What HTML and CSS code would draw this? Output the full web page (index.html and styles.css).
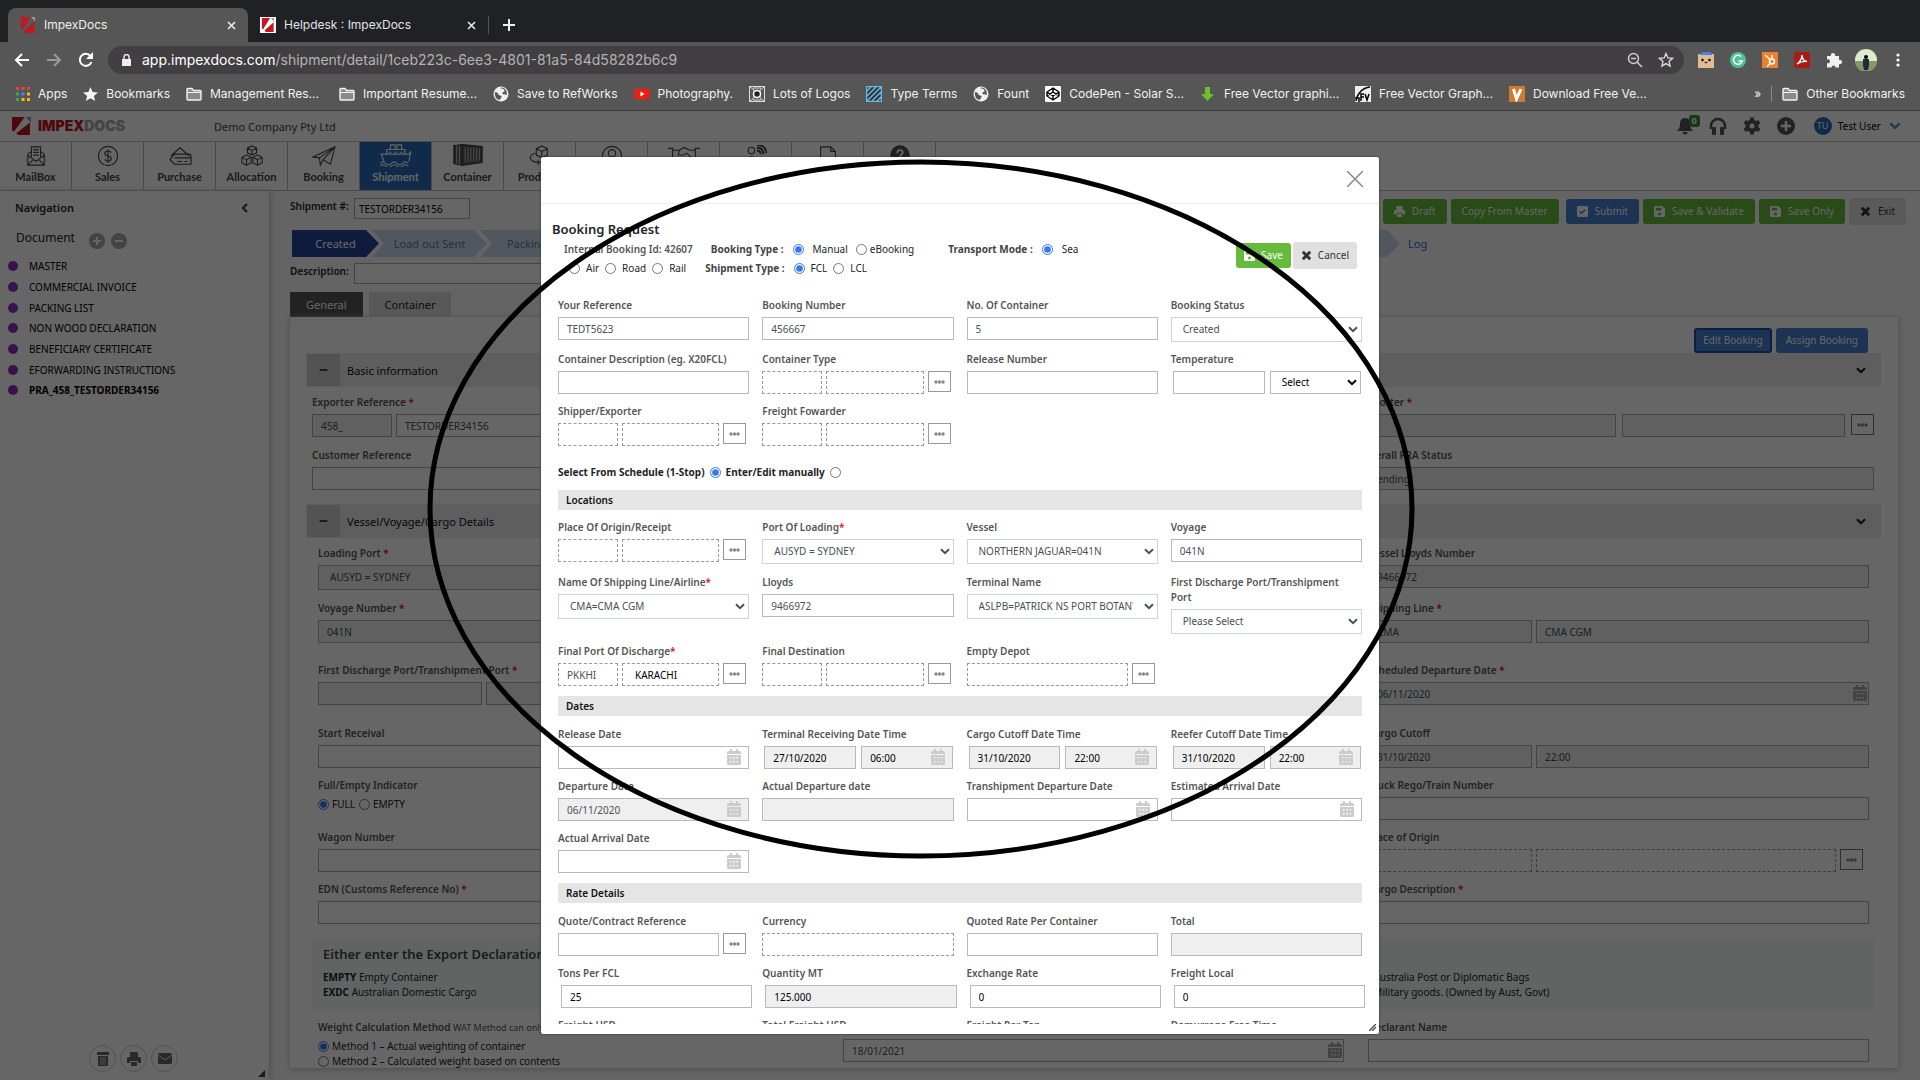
FILE: index.html
```html
<!DOCTYPE html>
<html lang="en">
<head>
<meta charset="utf-8">
<title>ImpexDocs</title>
<link rel="stylesheet" href="styles.css">
</head>
<body>
<svg class="sprite" aria-hidden="true">
  <symbol id="i-cal" viewBox="0 0 14 16"><path d="M3 0h2v2h4V0h2v2h1.500A1.500 1.500 0 0 1 14 3.500V5H0V3.500A1.500 1.500 0 0 1 1.500 2H3zM0 6h14v8.500a1.500 1.500 0 0 1-1.500 1.500h-11A1.500 1.500 0 0 1 0 14.500zM3 8v1.500h1.500V8zm3.300 0v1.500h1.500V8zm3.300 0v1.500h1.500V8zm-6.600 4v1.500h1.500V12zm3.300 0v1.500h1.500V12zm3.300 0v1.500h1.500V12z" fill-rule="evenodd"/></symbol>
  <symbol id="i-down" viewBox="0 0 10 7"><path d="M1 1.200l4 4 4-4" fill="none" stroke="currentColor" stroke-width="2"/></symbol>
  <symbol id="i-save" viewBox="0 0 12 12"><path d="M1.500 0H9l3 3v7.500a1.500 1.500 0 0 1-1.500 1.500h-9A1.500 1.500 0 0 1 0 10.500v-9A1.500 1.500 0 0 1 1.500 0zM2 2v3h6V2zm4 5a1.700 1.700 0 1 0 .01 0z" fill-rule="evenodd"/></symbol>
  <symbol id="i-x" viewBox="0 0 12 12"><path d="M2 2l8 8M10 2l-8 8" stroke="currentColor" stroke-width="3.200"/></symbol>
  <symbol id="i-print" viewBox="0 0 14 14"><path d="M3 0h7l1 1v4H3zM1.500 5h11A1.500 1.500 0 0 1 14 6.500V11h-3V9H3v2H0V6.500A1.500 1.500 0 0 1 1.500 5zM4 10h6v4H4z"/></symbol>
  <symbol id="i-folder" viewBox="0 0 16 14"><path d="M1 2.500a1 1 0 0 1 1-1h4l1.500 2H14a1 1 0 0 1 1 1V12a1 1 0 0 1-1 1H2a1 1 0 0 1-1-1z" fill="#8a8a8a" stroke="#f4f4f4" stroke-width="1.400"/><path d="M1 5.500h14" stroke="#f4f4f4"/></symbol>
  <symbol id="i-globe" viewBox="0 0 16 16"><circle cx="8" cy="8" r="7.500" fill="#f0f0f0"/><path d="M2 6c2 0 3 1 3.500 2.500S9 9 8.500 11 6 14 6 14C3 13 1.500 10 2 6zM7 3c2-1 4 0 4.500 1.500S9 6 9.500 7.500 13 8 13.500 9.500C14.500 6 13 2 8.500 1.500z" fill="#565656"/></symbol>
  <symbol id="i-logo" viewBox="0 0 18 20"><path d="M0 0h12L2 16 0 15zM17 6v14H6l-2-2z" fill="#c4161c"/><path d="M13 0h5v6z" fill="#9a9a9a"/></symbol>
  <symbol id="i-dots" viewBox="0 0 11 4"><circle cx="2" cy="2" r="1.700"/><circle cx="5.500" cy="2" r="1.700"/><circle cx="9" cy="2" r="1.700"/></symbol>
</svg>

<div class="tabs">
  <div class="tab tab-on"><svg class="s16" viewBox="0 0 18 20"><use href="#i-logo"/></svg><span>ImpexDocs</span><button class="tx" aria-label="Close tab"><svg viewBox="0 0 9 9"><path d="M1 1l7 7M8 1L1 8"/></svg></button></div>
  <div class="tab"><span class="fav"><svg viewBox="0 0 18 20"><use href="#i-logo"/></svg></span><span>Helpdesk : ImpexDocs</span><button class="tx" aria-label="Close tab"><svg viewBox="0 0 9 9"><path d="M1 1l7 7M8 1L1 8"/></svg></button></div>
  <button class="newtab" aria-label="New tab"><svg viewBox="0 0 12 12"><path d="M6 0v12M0 6h12" stroke="#eee" stroke-width="2"/></svg></button>
</div>
<div class="toolbar">
  <button aria-label="Back"><svg class="s16" viewBox="0 0 16 16"><path d="M15 8H2M8 2L2 8l6 6" fill="none" stroke="#fff" stroke-width="2"/></svg></button>
  <button aria-label="Forward"><svg class="s16" viewBox="0 0 16 16"><path d="M1 8h13M8 2l6 6-6 6" fill="none" stroke="#999" stroke-width="2"/></svg></button>
  <button aria-label="Reload"><svg class="s16" viewBox="0 0 16 16"><path d="M13.500 10A6 6 0 1 1 12.500 4" fill="none" stroke="#fff" stroke-width="2"/><path d="M15 0v7H8z" fill="#fff"/></svg></button>
  <div class="url">
    <svg width="9" height="12" viewBox="0 0 9 12"><path d="M0 5h9v7H0z" fill="#eee"/><path d="M2 5V3a2.500 2.500 0 0 1 5 0v2" fill="none" stroke="#eee" stroke-width="1.400"/></svg>
    <span class="addr"><b>app.impexdocs.com</b>/shipment/detail/1ceb223c-6ee3-4801-81a5-84d58282b6c9</span>
    <svg class="s16" viewBox="0 0 16 16" fill="none" stroke="#ccc" stroke-width="1.500"><circle cx="6.500" cy="6.500" r="5"/><path d="M10 10l5 5M4 6.500h5"/></svg>
    <svg class="s16 star" viewBox="0 0 16 16" fill="none" stroke="#ddd" stroke-width="1.300"><path d="M8 1.500l1.900 4.400 4.700.4-3.600 3.100 1.100 4.700L8 11.600l-4.100 2.500L5 9.400 1.400 6.300l4.700-.4z"/></svg>
  </div>
  <svg class="s16" viewBox="0 0 16 16"><path d="M0 2h16v14H0z" fill="#e3ba94"/><path d="M2 2l3-2h7l2 2v1H2z" fill="#4285e8"/><circle cx="4.500" cy="8" r="1.200"/><circle cx="11.500" cy="8" r="1.200"/><path d="M6.500 10l1.500 1 1.500-1" stroke="#000" fill="none"/></svg>
  <svg class="s16" viewBox="0 0 16 16"><circle cx="8" cy="8" r="8" fill="#4fbf98"/><path d="M11 4.500A4.500 4.500 0 1 0 12.300 9H8.500" fill="none" stroke="#fff" stroke-width="1.500"/></svg>
  <svg class="s16" viewBox="0 0 16 16"><path d="M0 0h16v16H0z" fill="#ef7f2d"/><g fill="none" stroke="#fff" stroke-width="1.500"><circle cx="10" cy="9.500" r="2.500"/><path d="M3 3l5 4.500M10 3v4M8 11.500l-3 3"/></g></svg>
  <svg class="s16" viewBox="0 0 16 16"><rect width="16" height="16" rx="2" fill="#a81c14"/><path d="M3 12c2-1 5-5 5-9 0 4 2 6 5 6.500-4-.5-7 .5-10 2.500z" fill="none" stroke="#fff" stroke-width="1.400"/></svg>
  <svg class="s16" viewBox="0 0 16 16"><path d="M1 4h4a2.200 2.200 0 1 1 4 0h4v4a2.200 2.200 0 1 1 0 4v3.500H9.500a2 2 0 1 0-4 0H1V11a2 2 0 1 0 0-3.500z" fill="#f0f0f0"/></svg>
  <svg width="22" height="22" viewBox="0 0 22 22"><circle cx="11" cy="11" r="11" fill="#dfe9cf"/><path d="M0 12h22a11 11 0 0 1-22 0z" fill="#7f9a62"/><circle cx="11" cy="8" r="2"/><path d="M8 10h6v6l-1 5H9l-1-5z" fill="#23283c"/></svg>
  <svg class="s16" viewBox="0 0 16 16" fill="#fff"><circle cx="8" cy="3" r="1.600"/><circle cx="8" cy="8" r="1.600"/><circle cx="8" cy="13" r="1.600"/></svg>
</div>
<div class="marks">
  <a href="#"><svg width="14" height="14" viewBox="0 0 14 14"><path d="M0 0h3v3H0zM5.500 0h3v3h-3zM11 0h3v3h-3z" fill="#ea4335"/><path d="M0 5.500h3v3H0zM0 11h3v3H0z" fill="#34a853"/><path d="M5.500 5.500h3v3h-3z" fill="#4285f4"/><path d="M11 5.500h3v3h-3zM5.500 11h3v3h-3zM11 11h3v3h-3z" fill="#fbbc05"/></svg><span>Apps</span></a>
  <a href="#"><svg width="15" height="14" viewBox="0 0 16 15"><path d="M8 0l2.200 5.400 5.800.5-4.400 3.700L13 15l-5-3-5 3 1.400-5.400L0 5.900l5.800-.5z" fill="#f4f4f4"/></svg><span>Bookmarks</span></a>
  <a href="#"><svg class="s16"><use href="#i-folder"/></svg><span class="cut">Management Res...</span></a>
  <a href="#"><svg class="s16"><use href="#i-folder"/></svg><span class="cut">Important Resume...</span></a>
  <a href="#"><svg class="s16"><use href="#i-globe"/></svg><span>Save to RefWorks</span></a>
  <a href="#"><svg class="s16" viewBox="0 0 16 16"><rect y="2.500" width="16" height="11" rx="3" fill="#e62117"/><path d="M6.500 5.500l4 2.500-4 2.500z" fill="#fff"/></svg><span>Photography.</span></a>
  <a href="#"><svg class="s16" viewBox="0 0 16 16"><path d="M0 0h16v16H0z" fill="#ddd"/><path d="M1 1h14v14H1z" fill="#555"/><path d="M1 1l4 3v8l-4 3M15 1l-4 3v8l4 3M4 2h8M4 14h8" stroke="#ddd" fill="none"/><circle cx="8" cy="8" r="3.500" fill="#222" stroke="#fff" stroke-width="1.500"/></svg><span>Lots of Logos</span></a>
  <a href="#"><svg class="s16" viewBox="0 0 16 16"><path d="M0 0h16v16H0z" fill="#333"/><path d="M.5.500h15v15H.5zM0 6l6-6M0 11L11 0M0 16L16 0M5 16L16 5M10 16l6-6" fill="none" stroke="#6ab8e6" stroke-width="1.500"/></svg><span>Type Terms</span></a>
  <a href="#"><svg class="s16"><use href="#i-globe"/></svg><span>Fount</span></a>
  <a href="#"><svg class="s16" viewBox="0 0 16 16"><rect width="16" height="16" rx="1" fill="#fff"/><path d="M8 2l6 4v4l-6 4-6-4V6zM2 6l6 4 6-4M2 10l6-4 6 4M8 2v4M8 10v4" fill="none" stroke="#000" stroke-width="1.400"/></svg><span class="cut">CodePen - Solar S...</span></a>
  <a href="#"><svg class="s16" viewBox="0 0 16 16"><path d="M5 1h5v7h4l-6.500 7L1 8h4z" fill="#6cc02c"/></svg><span class="cut">Free Vector graphi...</span></a>
  <a href="#"><svg class="s16" viewBox="0 0 16 16"><path d="M0 0h16v16H0z" fill="#eee"/><path d="M1 15C2 8 7 2 15 1M0 12h4v4M6 15V8h3M6 11h3M10 8l2 6 2-6" fill="none" stroke="#000" stroke-width="1.500"/></svg><span class="cut">Free Vector Graph...</span></a>
  <a href="#"><svg class="s16" viewBox="0 0 16 16"><path d="M0 0h16v16H0z" fill="#cf7a30"/><path d="M4.500 3l3 10L12 3" fill="none" stroke="#fff" stroke-width="3"/></svg><span>Download Free Ve...</span></a>
  <div class="more"><span>»</span><i></i><a href="#"><svg class="s16"><use href="#i-folder"/></svg><span>Other Bookmarks</span></a></div>
</div>

<div class="view">
  <div class="page">
    <header class="top">
      <a class="brand" href="#"><svg width="19" height="18" viewBox="0 0 18 20" preserveAspectRatio="none"><use href="#i-logo"/></svg><span><b>IMPEX</b>DOCS</span></a>
      <span class="company">Demo Company Pty Ltd</span>
      <div class="top-r">
        <span class="bell"><svg width="16" height="18" viewBox="0 0 16 18"><path d="M8 1c4 0 5 3 5 6s1 5 3 7H0c2-2 3-4 3-7s1-6 5-6zM5.500 15h5a2.500 2.500 0 0 1-5 0z" fill="#555"/></svg><em>0</em></span>
        <svg width="18" height="18" viewBox="0 0 18 18"><path d="M2 12V9a7 7 0 0 1 14 0v3" fill="none" stroke="#555" stroke-width="2.500"/><rect x="3" y="10" width="4" height="8" rx="1" fill="#555"/><rect x="11" y="10" width="4" height="8" rx="1" fill="#555"/></svg>
        <svg width="18" height="18" viewBox="0 0 18 18"><circle cx="9" cy="9" r="4.500" fill="none" stroke="#555" stroke-width="4"/><path d="M9 .5v4M9 13.500v4M1.600 4.800l3.500 2M12.900 11.200l3.500 2M1.600 13.200l3.500-2M12.900 6.800l3.500-2" stroke="#555" stroke-width="4"/></svg>
        <svg width="18" height="18" viewBox="0 0 18 18"><circle cx="9" cy="9" r="9" fill="#555"/><path d="M9 4v10M4 9h10" stroke="#fff" stroke-width="2.500"/></svg>
        <span class="avatar">TU</span><span class="user">Test User</span><svg class="uc" width="12" height="8" viewBox="0 0 10 7"><use href="#i-down"/></svg>
      </div>
    </header>
    <nav class="mods">
      <a href="#"><svg viewBox="0 0 28 24"><path d="M5 10v12h18V10l-4-3M9 7l-4 3M5 11l9 7 9-7M5 22l6-6M23 22l-6-6M9 13V2h10v11M11 5h6M11 8h6M11 11h6"/></svg>MailBox</a>
      <a href="#"><svg viewBox="0 0 28 24"><circle cx="14" cy="12" r="10.500"/><path d="M17.500 8.500C17 7 15.500 6.500 14 6.500c-2 0-3.500 1-3.500 2.700 0 3.800 7 2 7 5.800 0 1.700-1.500 2.700-3.500 2.700-1.700 0-3-.7-3.500-2.200M14 4.500v15"/></svg>Sales</a>
      <a href="#"><svg viewBox="0 0 28 24"><path d="M4 12l10-9 10 9M8 10h16a2 2 0 0 1 2 2v9H8l-5-5 5-6M8 14h18M11 18h5M19 18h3"/></svg>Purchase</a>
      <a href="#"><svg viewBox="0 0 28 24"><path d="M14 1l5 2.500v5L14 11 9 8.500v-5zM9 3.500L14 6l5-2.500M14 6v5M8 11l5 2.500v6L8 22l-5-2.500v-6zM3 13.500L8 16l5-2.500M8 16v6M20 11l5 2.500v6L20 22l-5-2.500v-6zM15 13.500l5 2.500 5-2.500M20 16v6"/></svg>Allocation</a>
      <a href="#"><svg viewBox="0 0 28 24"><path d="M2 13L26 2l-5 19-8-5-3 6-1-8zM9 14L26 2 13 16"/></svg>Booking</a>
      <a href="#" class="on"><svg class="ship" viewBox="0 0 36 26"><path d="M5 20L2 12h30l2-3-2 11M8 12V7h20l-1 5M12 7V2h5v5M19 7V2h5v5M10 10h3M16 10h3M22 10h3M1 22q3-3 6 0t6 0 6 0 6 0 6 0M1 25q3-3 6 0t6 0 6 0 6 0 6 0"/></svg>Shipment</a>
      <a href="#"><svg class="ship" viewBox="0 0 36 24"><path d="M3 2l9-1v22l-9-2zM12 1l21 2v17l-21 3z" fill="#555"/><path d="M6 2v19M9 2v20M15 4v16M18 4v16M21 4v15M24 4v15M27 4v15M30 5v13" stroke="#bbb"/></svg>Container</a>
      <a href="#"><svg viewBox="0 0 28 24"><path d="M16 1l6 3v7l-6 3-6-3V4zM10 4l6 3 6-3M16 7v7M9 9c-8 2-8 9 3 10 8 0 12-3 13-6M12 16v6"/></svg>Products</a>
      <a href="#"><svg viewBox="0 0 28 24"><circle cx="14" cy="12" r="10.500"/><circle cx="14" cy="9" r="4"/><path d="M7 20c1-8 13-8 14 0"/></svg>Parties</a>
      <a href="#"><svg class="ship" viewBox="0 0 36 24"><path d="M1 5h5v12H1M35 5h-5v12h5M6 7h7l5-3 6 3h6M6 16l10 6 10-6M13 7l-1 5h5l4-2 6 6"/></svg>Deals</a>
      <a href="#"><svg viewBox="0 0 28 24"><circle cx="9" cy="6" r="3.500"/><path d="M3 20c0-9 12-9 12 0M15 6c3 0 4 2 4 4M15 3c5 0 7 3 7 7M15 0c8 0 10 5 10 9" stroke-width="2"/></svg>Contacts</a>
      <a href="#"><svg viewBox="0 0 28 24"><path d="M6 2h11l5 5v15H6zM17 2v5h5"/></svg>Reports</a>
      <a href="#"><svg viewBox="0 0 28 24"><circle cx="14" cy="11" r="10" fill="#555"/><path d="M11 9c0-5 7-4 6-.5-.5 2-3 2-3 4.500M14 15v2" stroke="#fff" stroke-width="2"/></svg>Help</a>
    </nav>
    <div class="cols">
      <aside class="side">
        <div class="side-h"><strong>Navigation</strong><svg width="8" height="10" viewBox="0 0 8 10"><path d="M6 1L2 5l4 4" fill="none" stroke="#444" stroke-width="2.200"/></svg></div>
        <div class="side-d"><span>Document</span>
          <button aria-label="Add document"><svg class="s16" viewBox="0 0 16 16"><circle cx="8" cy="8" r="8" fill="#aaa"/><path d="M8 4v8M4 8h8" stroke="#fff" stroke-width="2"/></svg></button>
          <button aria-label="Remove document"><svg class="s16" viewBox="0 0 16 16"><circle cx="8" cy="8" r="8" fill="#aaa"/><path d="M4 8h8" stroke="#fff" stroke-width="2"/></svg></button></div>
        <ul class="docs"><li>MASTER</li><li>COMMERCIAL INVOICE</li><li>PACKING LIST</li><li>NON WOOD DECLARATION</li><li>BENEFICIARY CERTIFICATE</li><li>EFORWARDING INSTRUCTIONS</li><li><b>PRA_458_TESTORDER34156</b></li></ul>
        <div class="side-b">
          <button aria-label="Delete"><svg width="12" height="14" viewBox="0 0 12 14"><path d="M0 0h12v3H0zM1 4h10v10H1z" fill="#666"/><path d="M4 5v8M6 5v8M8 5v8" stroke="#ccc"/></svg></button>
          <button aria-label="Print"><svg width="14" height="14"><use href="#i-print" fill="#666"/></svg></button>
          <button aria-label="Email"><svg width="14" height="11" viewBox="0 0 14 11"><rect width="14" height="11" rx="1.500" fill="#666"/><path d="M0 2l7 5 7-5" fill="none" stroke="#eee"/></svg></button>
        </div>
        <svg class="grip" width="7" height="7" viewBox="0 0 7 7"><path d="M7 0v7H0z" fill="#444"/></svg>
      </aside>
      <main class="main">
        <div class="head">
          <div class="line"><label for="ship">Shipment #:</label><input id="ship" class="ship-no" value="TESTORDER34156"></div>
          <div class="acts">
            <button class="btn blue">Action</button>
            <button class="btn"><svg><use href="#i-print"/></svg>Draft</button>
            <button class="btn sp">Copy From Master</button>
            <button class="btn blue"><svg viewBox="0 0 12 12"><path d="M1 0h10l1 1v10l-1 1H1l-1-1V1z"/><path d="M3 6l2 2 4-4" fill="none" stroke="#4a7fd0" stroke-width="1.500"/></svg>Submit</button>
            <button class="btn"><svg><use href="#i-save"/></svg>Save &amp; Validate</button>
            <button class="btn"><svg><use href="#i-save"/></svg>Save Only</button>
            <button class="btn grey"><svg><use href="#i-x"/></svg>Exit</button>
          </div>
        </div>
        <div class="steps"><span class="step cur">Created</span><span class="step">Load out Sent</span><span class="step">Packing List</span><span class="step rest"></span><a href="#">Log</a></div>
        <div class="line desc"><label for="desc">Description:</label><input id="desc"></div>
        <div class="tabs2"><button class="on">General</button><button>Container</button></div>
        <div class="panel">
          <div class="bk"><button class="btn blue focus">Edit Booking</button><button class="btn blue">Assign Booking</button></div>
          <div class="sec"><i>–</i><span>Basic information</span><svg width="10" height="7"><use href="#i-down"/></svg></div>
          <div class="basic">
            <div class="row r53">
              <div class="f"><label for="er">Exporter Reference <u>*</u></label><div class="g"><input id="er" class="w80" value="458_" readonly><input aria-label="Order" value="TESTORDER34156"></div></div>
              <div class="f c3"><label for="ex">Exporter <u>*</u></label><div class="g wide"><input id="ex" class="w254" readonly><input aria-label="Exporter name" readonly><button class="dots" aria-label="Find exporter"><svg><use href="#i-dots"/></svg></button></div></div>
            </div>
            <div class="row r56">
              <div class="f"><label for="cr">Customer Reference</label><input id="cr"></div>
              <div class="f c3"><label for="ps">Overall PRA Status</label><input id="ps" value="Pending" readonly></div>
            </div>
          </div>
          <div class="sec"><i>–</i><span>Vessel/Voyage/Cargo Details</span><svg width="10" height="7"><use href="#i-down"/></svg></div>
          <div class="cargo">
            <div class="row r55">
              <div class="f"><label for="lp">Loading Port <u>*</u></label><select id="lp" class="dis"><option>AUSYD = SYDNEY</option></select></div>
              <div class="f c3"><label for="vl">Vessel Lloyds Number</label><input id="vl" value="9466972" readonly></div>
            </div>
            <div class="row r62">
              <div class="f"><label for="vn">Voyage Number <u>*</u></label><input id="vn" value="041N" readonly></div>
              <div class="f c3"><label for="sl">Shipping Line <u>*</u></label><div class="g"><input id="sl" class="third" value="CMA" readonly><input aria-label="Shipping line name" value="CMA CGM" readonly></div></div>
            </div>
            <div class="row r63">
              <div class="f"><label for="fd">First Discharge Port/Transhipment Port <u>*</u></label><div class="g"><input id="fd" class="third" readonly><input aria-label="Discharge port name" readonly></div></div>
              <div class="f c3"><label for="sd">Scheduled Departure Date <u>*</u></label><div class="d edge"><input id="sd" value="06/11/2020" readonly><svg><use href="#i-cal"/></svg></div></div>
            </div>
            <div class="row r52">
              <div class="f"><label for="sr">Start Receival</label><input id="sr"></div>
              <div class="f c3"><label for="cc">Cargo Cutoff</label><div class="g"><input id="cc" class="third" value="31/10/2020" readonly><input aria-label="Cargo cutoff time" value="22:00" readonly></div></div>
            </div>
            <div class="row r52">
              <fieldset class="f"><legend>Full/Empty Indicator</legend><div class="rad"><label><input type="radio" name="fe" checked>FULL</label><label><input type="radio" name="fe">EMPTY</label></div></fieldset>
              <div class="f c3"><label for="tr">Truck Rego/Train Number</label><input id="tr"></div>
            </div>
            <div class="row r52">
              <div class="f"><label for="wn">Wagon Number</label><input id="wn"></div>
              <div class="f c3"><label for="po">Place of Origin</label><div class="g origin"><input id="po" class="third dash"><input aria-label="Origin name" class="dash"><button class="dots" aria-label="Find origin"><svg><use href="#i-dots"/></svg></button></div></div>
            </div>
            <div class="row r52">
              <div class="f"><label for="edn">EDN (Customs Reference No) <u>*</u></label><input id="edn"></div>
              <div class="f c3"><label for="cd">Cargo Description <u>*</u></label><input id="cd"></div>
            </div>
          </div>
          <div class="note"><h3>Either enter the Export Declaration</h3>
            <div class="note-g"><p><b>EMPTY</b> Empty Container<br><b>EXDC</b> Australian Domestic Cargo</p><p class="c3">Australia Post or Diplomatic Bags<br>Military goods. (Owned by Aust, Govt)</p></div>
          </div>
          <div class="cargo last">
            <div class="row">
              <fieldset class="f"><legend>Weight Calculation Method <small>WAT Method can only</small></legend><div class="rad col"><label><input type="radio" name="wm" checked>Method 1 – Actual weighting of container</label><label><input type="radio" name="wm">Method 2 – Calculated weight based on contents</label></div></fieldset>
              <div class="f"><label for="dd">Declaration Date</label><div class="d edge"><input id="dd" value="18/01/2021"><svg><use href="#i-cal"/></svg></div></div>
              <div class="f"><label for="dn">Declarant Name</label><input id="dn"></div>
            </div>
          </div>
        </div>
      </main>
    </div>
  </div>

  <div class="backdrop">
    <div class="dialog" role="dialog" aria-label="Booking Request">
      <div class="dlg-h"><button aria-label="Close"><svg width="16" height="16" viewBox="0 0 16 16"><path d="M0 0l16 16M16 0L0 16" stroke="#888" stroke-width="1.500"/></svg></button></div>
      <div class="dlg-b">
        <h2>Booking Request</h2>
        <div class="opts">
          <div class="opt-lines">
            <div class="ol"><span class="id">Internal Booking Id: 42607</span><strong>Booking Type :</strong><label><input type="radio" name="bt" checked>Manual</label><label class="tight"><input type="radio" name="bt">eBooking</label><strong class="tm">Transport Mode :</strong><label><input type="radio" name="tm" checked>Sea</label></div>
            <div class="ol two"><label><input type="radio" name="tm">Air</label><label><input type="radio" name="tm">Road</label><label><input type="radio" name="tm">Rail</label><strong>Shipment Type :</strong><label><input type="radio" name="st" checked>FCL</label><label><input type="radio" name="st">LCL</label></div>
          </div>
          <div class="sv"><button class="btn"><svg><use href="#i-save"/></svg>Save</button><button class="btn grey"><svg><use href="#i-x"/></svg>Cancel</button></div>
        </div>
        <div class="form">
          <div class="row r54">
            <div class="f"><label for="a1">Your Reference</label><input id="a1" value="TEDT5623"></div>
            <div class="f"><label for="a2">Booking Number</label><input id="a2" value="456667"></div>
            <div class="f"><label for="a3">No. Of Container</label><input id="a3" value="5"></div>
            <div class="f"><label for="a4">Booking Status</label><div class="s"><select id="a4"><option>Created</option></select><svg><use href="#i-down"/></svg></div></div>
          </div>
          <div class="row r52">
            <div class="f"><label for="b1">Container Description (eg. X20FCL)</label><input id="b1"></div>
            <div class="f"><label for="b2">Container Type</label><div class="g pick"><input id="b2" class="dash w60"><input class="dash" aria-label="Container type name"><button class="dots" aria-label="Find container type"><svg><use href="#i-dots"/></svg></button></div></div>
            <div class="f"><label for="b3">Release Number</label><input id="b3"></div>
            <div class="f"><label for="b4">Temperature</label><div class="g half"><input id="b4"><div class="s low"><select aria-label="Temperature unit"><option>Select</option></select><svg><use href="#i-down"/></svg></div></div></div>
          </div>
          <div class="row r52">
            <div class="f"><label for="c1">Shipper/Exporter</label><div class="g pick"><input id="c1" class="dash w60"><input class="dash" aria-label="Shipper name"><button class="dots" aria-label="Find shipper"><svg><use href="#i-dots"/></svg></button></div></div>
            <div class="f"><label for="c2">Freight Fowarder</label><div class="g pick"><input id="c2" class="dash w60"><input class="dash" aria-label="Forwarder name"><button class="dots" aria-label="Find forwarder"><svg><use href="#i-dots"/></svg></button></div></div>
          </div>
          <div class="sched"><label for="s1">Select From Schedule (1-Stop)</label><input id="s1" type="radio" name="sc" checked><label for="s2">Enter/Edit manually</label><input id="s2" type="radio" name="sc"></div>
          <h3 class="bar">Locations</h3>
          <div class="row r55">
            <div class="f"><label for="d1">Place Of Origin/Receipt</label><div class="g pick"><input id="d1" class="dash w60"><input class="dash" aria-label="Origin name"><button class="dots" aria-label="Find place"><svg><use href="#i-dots"/></svg></button></div></div>
            <div class="f"><label for="d2">Port Of Loading<u>*</u></label><div class="s"><select id="d2"><option>AUSYD = SYDNEY</option></select><svg><use href="#i-down"/></svg></div></div>
            <div class="f"><label for="d3">Vessel</label><div class="s"><select id="d3"><option>NORTHERN JAGUAR=041N</option></select><svg><use href="#i-down"/></svg></div></div>
            <div class="f"><label for="d4">Voyage</label><input id="d4" value="041N"></div>
          </div>
          <div class="row r69">
            <div class="f"><label for="e1">Name Of Shipping Line/Airline<u>*</u></label><div class="s"><select id="e1"><option>CMA=CMA CGM</option></select><svg><use href="#i-down"/></svg></div></div>
            <div class="f"><label for="e2">Lloyds</label><input id="e2" value="9466972"></div>
            <div class="f"><label for="e3">Terminal Name</label><div class="s"><select id="e3"><option>ASLPB=PATRICK NS PORT BOTANY</option></select><svg><use href="#i-down"/></svg></div></div>
            <div class="f"><label for="e4">First Discharge Port/Transhipment<br>Port</label><div class="s"><select id="e4"><option>Please Select</option></select><svg><use href="#i-down"/></svg></div></div>
          </div>
          <div class="row r52">
            <div class="f"><label for="g1">Final Port Of Discharge<u>*</u></label><div class="g pick"><input id="g1" class="dash w60" value="PKKHI"><input class="dash blk" aria-label="Port name" value="KARACHI"><button class="dots" aria-label="Find port"><svg><use href="#i-dots"/></svg></button></div></div>
            <div class="f"><label for="g2">Final Destination</label><div class="g pick"><input id="g2" class="dash w60"><input class="dash" aria-label="Destination name"><button class="dots" aria-label="Find destination"><svg><use href="#i-dots"/></svg></button></div></div>
            <div class="f"><label for="g3">Empty Depot</label><div class="g pick"><input id="g3" class="dash"><button class="dots" aria-label="Find depot"><svg><use href="#i-dots"/></svg></button></div></div>
          </div>
          <h3 class="bar">Dates</h3>
          <div class="row r52">
            <div class="f"><label for="h1">Release Date</label><div class="d"><input id="h1"><svg><use href="#i-cal"/></svg></div></div>
            <div class="f"><label for="h2">Terminal Receiving Date Time</label><div class="g half blk"><input id="h2" value="27/10/2020" readonly><div class="d"><input aria-label="Receiving time" value="06:00" readonly><svg><use href="#i-cal"/></svg></div></div></div>
            <div class="f"><label for="h3">Cargo Cutoff Date Time</label><div class="g half blk"><input id="h3" value="31/10/2020" readonly><div class="d"><input aria-label="Cutoff time" value="22:00" readonly><svg><use href="#i-cal"/></svg></div></div></div>
            <div class="f"><label for="h4">Reefer Cutoff Date Time</label><div class="g half blk"><input id="h4" value="31/10/2020" readonly><div class="d"><input aria-label="Reefer cutoff time" value="22:00" readonly><svg><use href="#i-cal"/></svg></div></div></div>
          </div>
          <div class="row r52">
            <div class="f"><label for="j1">Departure Date</label><div class="d"><input id="j1" value="06/11/2020" readonly><svg><use href="#i-cal"/></svg></div></div>
            <div class="f"><label for="j2">Actual Departure date</label><input id="j2" readonly></div>
            <div class="f"><label for="j3">Transhipment Departure Date</label><div class="d"><input id="j3"><svg><use href="#i-cal"/></svg></div></div>
            <div class="f"><label for="j4">Estimated Arrival Date</label><div class="d"><input id="j4"><svg><use href="#i-cal"/></svg></div></div>
          </div>
          <div class="row r52"><div class="f"><label for="k1">Actual Arrival Date</label><div class="d"><input id="k1"><svg><use href="#i-cal"/></svg></div></div></div>
          <h3 class="bar">Rate Details</h3>
          <div class="row r52">
            <div class="f"><label for="l1">Quote/Contract Reference</label><div class="g pick"><input id="l1"><button class="dots" aria-label="Find quote"><svg><use href="#i-dots"/></svg></button></div></div>
            <div class="f"><label for="l2">Currency</label><input id="l2" class="dash"></div>
            <div class="f"><label for="l3">Quoted Rate Per Container</label><input id="l3"></div>
            <div class="f"><label for="l4">Total</label><input id="l4" readonly></div>
          </div>
          <div class="row r52 nums">
            <div class="f"><label for="m1">Tons Per FCL</label><input id="m1" value="25"></div>
            <div class="f"><label for="m2">Quantity MT</label><input id="m2" value="125.000" readonly></div>
            <div class="f"><label for="m3">Exchange Rate</label><input id="m3" value="0"></div>
            <div class="f"><label for="m4">Freight Local</label><input id="m4" value="0"></div>
          </div>
          <div class="row">
            <div class="f"><label for="n1">Freight USD</label><input id="n1"></div>
            <div class="f"><label for="n2">Total Freight USD</label><input id="n2"></div>
            <div class="f"><label for="n3">Freight Per Ton</label><input id="n3"></div>
            <div class="f"><label for="n4">Demurrage Free Time</label><input id="n4"></div>
          </div>
        </div>
      </div>
      <svg class="grip" width="7" height="7" viewBox="0 0 7 7"><path d="M7 0L0 7M7 3L3 7" stroke="#555" stroke-width="1.500"/></svg>
    </div>
    <svg class="mark" viewBox="0 0 988 700"><ellipse cx="494" cy="350" rx="491" ry="347" fill="none" stroke="#000" stroke-width="5"/></svg>
  </div>
</div>
</body>
</html>
```
FILE: styles.css
```css
* { box-sizing: border-box; }
body { margin: 0; height: 100vh; display: flex; flex-direction: column; overflow: hidden; font: 10px/15px "Noto Sans", "Open Sans", sans-serif; color: #212529; background: #565656; }
button { border: 0; background: none; padding: 0; font: inherit; color: inherit; }
svg { display: block; flex: none; }
a { color: inherit; text-decoration: none; }
h2, h3, p, ul, fieldset { margin: 0; padding: 0; border: 0; min-width: 0; }
.sprite { position: absolute; width: 0; height: 0; }
.s16 { width: 16px; height: 16px; }

/* browser frame */
.tabs { height: 42px; background: #202124; padding: 8px 8px 0; display: flex; font: 12px/34px Inter, sans-serif; color: #e4e4e4; flex: none; }
.tab { width: 240px; padding: 0 12px; display: flex; align-items: center; gap: 8px; }
.tab span:not(.fav) { flex: 1; }
.tab-on { background: #565656; border-radius: 8px 8px 0 0; color: #f0f0f0; }
.tx svg { width: 9px; height: 9px; stroke: #eee; stroke-width: 1.500; }
.fav { width: 16px; height: 16px; background: #fff; padding: 1px; }
.fav svg { width: 14px; height: 14px; }
.newtab { padding: 0 14px; border-left: 1px solid #555; margin: 8px 0; }
.newtab svg { width: 12px; height: 12px; }
.toolbar { height: 36px; display: flex; align-items: center; gap: 16px; padding: 0 14px; flex: none; }
.toolbar > svg[width="22"] { margin: 0 -3px; }
.url { flex: 1; height: 28px; margin-left: -2px; margin-right: -2px; border-radius: 14px; background: #413f42; display: flex; align-items: center; gap: 11px; padding: 0 10px 0 14px; }
.addr { flex: 1; font: 14px/28px Inter, sans-serif; color: #b4b4b4; }
.addr b { font-weight: 400; color: #fff; }
.star { margin-left: 4px; }
.marks { height: 33px; border-bottom: 1px solid #3c3c3c; display: flex; align-items: center; gap: 16px; padding: 0 15px 0 16px; font: 12px/16px Inter, sans-serif; color: #f2f2f2; flex: none; white-space: nowrap; }
.marks a { display: flex; align-items: center; gap: 8px; }
.cut { min-width: 113px; }
.more { margin-left: auto; display: flex; gap: 10px; }
.more i { width: 1px; background: #888; }

/* application */
.view { flex: 1; position: relative; overflow: hidden; min-height: 0; }
.page { height: 100%; background: #fff; display: flex; flex-direction: column; }
.top { height: 31px; border-bottom: 1px solid #bbb; display: flex; align-items: center; padding: 0 19px 0 12px; flex: none; }
.brand { display: flex; align-items: center; gap: 7px; width: 202px; font: 900 14px/18px Inter, sans-serif; color: #aaa; }
.brand b { color: #c4161c; font-weight: 900; }
.company { font-size: 11px; color: #444; }
.top-r { margin-left: auto; display: flex; align-items: center; gap: 16px; }
.bell { position: relative; }
.bell em { position: absolute; left: 12px; top: -2px; width: 11px; height: 12px; border-radius: 3px; background: #2f9a2f; color: #fff; font: 700 9px/12px "Noto Sans", sans-serif; text-align: center; }
.avatar { width: 18px; height: 18px; border-radius: 50%; background: #2a6bb9; color: #fff; font-size: 9px; line-height: 18px; text-align: center; margin-left: 3px; }
.user { margin: 0 -8px 0 -10px; color: #000; }
.uc { color: #4a86d0; }
.mods { height: 49px; display: flex; border-bottom: 1px solid #bbb; flex: none; font: 700 11px/14px Lato, sans-serif; }
.mods a { width: 72px; border-right: 1px solid #bbb; display: flex; flex-direction: column; align-items: center; justify-content: flex-end; gap: 3px; padding-bottom: 6px; color: #444; }
.mods svg { width: 26px; height: 22px; fill: none; stroke: #444; stroke-width: 1.200; }
.mods .ship { width: 34px; height: 24px; }
.mods .on { background: #2a6bb9; color: #fff; }
.mods .on svg { stroke: #fff; }
.cols { flex: 1; display: flex; min-height: 0; }
.side { width: 269px; flex: none; position: relative; display: flex; flex-direction: column; border-right: 1px solid #f0f0f0; box-shadow: 2px 0 6px #ccc; padding-bottom: 8px; }
.side-h { display: flex; justify-content: space-between; align-items: center; padding: 7px 19px 0 15px; font-size: 11px; line-height: 20px; }
.side-h strong { font-weight: 600; }
.side-d { display: flex; align-items: flex-end; gap: 6px; padding: 9px 0 0 16px; font-size: 12px; line-height: 22px; }
.side-d span { margin-right: 8px; }
.docs { list-style: none; padding: 7px 0 0 8px; flex: 1; line-height: 20px; color: #000; display: flex; flex-direction: column; }
.docs li { display: flex; align-items: center; gap: 11px; margin-bottom: 1px; }
.docs li:nth-child(3), .docs li:nth-child(6) { margin-bottom: 0; }
.docs li::before { content: ""; width: 10px; height: 10px; border-radius: 50%; background: #8a2fc0; }
.side-b { display: flex; gap: 4px; padding-left: 89px; }
.side-b button { width: 27px; height: 27px; border: 1px solid #ccc; border-radius: 50%; display: flex; align-items: center; justify-content: center; }
.grip { position: absolute; right: 3px; bottom: 3px; }
.main { flex: 1; background: #fafafa; padding: 7px 22px 12px 21px; min-width: 0; display: flex; flex-direction: column; }
.head { display: flex; justify-content: space-between; margin-right: -8px; }
.line { display: flex; gap: 4px; }
.line label { width: 60px; font-weight: 600; line-height: 17px; white-space: nowrap; }
.line input { height: 21px; color: #000; padding: 0 4px; }
.line .ship-no { width: 116px; }
.acts { display: flex; gap: 4px; align-items: center; height: 26px; }
.acts .btn { padding: 0 11px; gap: 7px; }
.acts .sp { margin-right: 3px; }
.btn { height: 25px; border-radius: 3px; background: #65bb3b; color: #fff; padding: 0 9px; display: flex; align-items: center; gap: 8px; white-space: nowrap; }
.btn svg { width: 11px; height: 11px; fill: #fff; }
.btn.blue { background: #4a7fd0; }
.btn.grey { background: #e0e0e0; color: #333; height: 27px; }
.bk .btn { padding: 0 10px; }
.bk .focus { border: 2px solid #1d4fa8; padding: 0 7px; }
.steps { display: flex; height: 27px; margin: 6px 0 6px 2px; font-size: 11px; line-height: 27px; }
.step { width: 115px; margin-right: -7px; background: #ccdaee; color: #66788f; text-align: center; clip-path: polygon(0 0, calc(100% - 13px) 0, 100% 50%, calc(100% - 13px) 100%, 0 100%, 12px 50%); }
.step.cur { width: 87px; background: #24459a; color: #fff; clip-path: polygon(0 0, calc(100% - 13px) 0, 100% 50%, calc(100% - 13px) 100%, 0 100%); }
.step.rest { flex: 1; max-width: 812px; margin-right: 8px; }
.steps a { color: #2a6bd0; }
.desc input { flex: 0 1 900px; }
.tabs2 { display: flex; gap: 6px; margin-top: 8px; font-size: 11px; }
.tabs2 button { height: 25px; padding: 0 16px; background: #dcdcdc; }
.tabs2 .on { background: #555; color: #fff; }
.panel { flex: 1; background: #fff; box-shadow: 0 1px 6px #bbb; padding: 11px 17px 0 16px; min-height: 0; }
.bk { display: flex; justify-content: flex-end; gap: 4px; padding-right: 13px; }
.sec { height: 34px; background: #ebebeb; display: flex; align-items: center; gap: 7px; padding-right: 15px; font-size: 11px; color: #111; }
.sec i { width: 33px; height: 32px; margin-left: 1px; background: #d0d0d0; text-align: center; font: 700 18px/28px "Noto Sans", sans-serif; color: #444; }
.sec span { flex: 1; }
.basic { padding: 8px 7px 0 6px; }
.basic .row { gap: 13px; grid-template-columns: repeat(3, 1fr); }
.cargo { padding: 8px 12px 0; }
.cargo .row { gap: 24px; grid-template-columns: repeat(3, 1fr); }
.note { margin: 4px 7px 0 6px; height: 73px; background: #effbf7; padding: 6px 11px; line-height: 15px; }
.note h3 { font-size: 13px; line-height: 20px; font-weight: 600; color: #444; margin-bottom: 6px; }
.note-g { display: grid; grid-template-columns: repeat(3, 1fr); gap: 13px; }
.note-g .c3 { margin-left: 15px; }
.cargo.last { padding-top: 9px; }

/* form parts */
.row { display: grid; grid-template-columns: repeat(4, 1fr); gap: 13px; align-items: start; }
.r52 { min-height: 52px; } .r53 { min-height: 53px; } .r54 { min-height: 54px; } .r55 { min-height: 55px; }
.r56 { min-height: 56px; } .r62 { min-height: 62px; } .r63 { min-height: 63px; } .r69 { min-height: 69px; }
.c3 { grid-column: 3; }
.f { min-width: 0; }
.f > label, legend { display: block; padding: 0; height: auto; margin-bottom: 4px; font-weight: 600; color: #555; white-space: nowrap; }
small { font-size: 9px; line-height: 10px; font-weight: 400; }
u { text-decoration: none; color: #d9151b; }
input, select { font: inherit; font-size: 10px; color: #495057; margin: 0; border: 1px solid #b9b9b9; border-radius: 0; background: #fff; height: 23px; width: 100%; min-width: 0; padding: 0 8px; display: block; }
input[readonly], .dis { background: #efefef; }
.page input, .page select { border-color: #aaa; }
select { appearance: none; height: 25px; padding: 0 24px 0 11px; border-color: #ced4da; overflow: hidden; }
input.dash { border-style: dashed; border-color: #999; }
input[type="radio"] { width: 11px; height: 11px; padding: 0; accent-color: #3577f5; flex: none; }
.g { display: flex; gap: 4px; }
.g > * { flex: 1; }
.g > .w60 { flex: 0 0 60px; } .g > .w80 { flex: 0 0 80px; } .g > .w254 { flex: 0 0 254px; } .g > .third { flex: 0 0 164px; }
.g.pick { padding-right: 3px; gap: 4px; }
.g.origin { padding-right: 6px; }
.g.wide { gap: 6px; }
.g > .dots { flex: 0 0 23px; height: 21px; border: 1px solid #999; display: flex; align-items: center; justify-content: center; background: #fff; }
.page .dots { border-color: #777; }
.dots svg { width: 11px; height: 4px; fill: #888; }
.g.half { padding: 0 1px 0 2px; gap: 5px; }
.g.half > * { flex: 1 1 50%; }
.blk input, input.blk { color: #000; }
input.blk { padding-left: 12px; }
.d, .s { position: relative; }
.d svg { position: absolute; right: 8px; top: 3px; width: 14px; height: 16px; fill: #ccc; }
.d.edge svg { right: 2px; }
.page .d svg { fill: #aaa; }
.s svg { position: absolute; right: 4px; top: 9px; width: 10px; height: 7px; color: #495057; }
.s.low select { height: 23px; color: #000; border-color: #b9b9b9; }
.s.low svg { color: #000; top: 8px; }
.rad { display: flex; gap: 4px; }
.rad label { display: flex; gap: 3px; align-items: center; }
.rad.col { flex-direction: column; gap: 0; }
.nums input { margin-left: 3px; color: #000; }

/* dialog */
.backdrop { position: absolute; inset: 0; background: rgba(0, 0, 0, .6); padding: 46px 0; display: flex; justify-content: center; }
.dialog { width: 838px; max-width: 100%; background: #fff; border-radius: 2px; display: flex; flex-direction: column; position: relative; padding-bottom: 10px; box-shadow: 0 0 2px #222; }
.dlg-h { height: 47px; border-bottom: 1px solid #e9ecef; display: flex; justify-content: flex-end; align-items: center; padding: 0 16px 2px 0; flex: none; }
.dlg-b { flex: 1; overflow: hidden; padding: 14px 17px 0; min-height: 0; }
.dlg-b h2 { font-size: 13px; line-height: 22px; font-weight: 600; margin-left: -6px; }
.opts { display: flex; justify-content: space-between; padding: 0 5px 0 6px; height: 58px; }
.opt-lines { flex: 1; }
.ol { display: flex; align-items: center; height: 19px; gap: 9px; white-space: nowrap; }
.ol strong { font-weight: 700; color: #444; margin-left: 9px; }
.ol .id { font-weight: 600; color: #555; }
.ol label { display: flex; align-items: center; gap: 9px; }
.ol label + label { margin-left: -1px; }
.ol .tight { gap: 3px; }
.ol .tm { margin-left: 25px; }
.ol.two { padding-left: 5px; gap: 7px; }
.ol.two label { gap: 6px; }
.ol.two strong { margin: 0 2px 0 12px; }
.sv { display: flex; gap: 2px; align-items: center; height: 28px; margin-top: 1px; }
.sv .btn { gap: 6px; padding: 0 8px; }
.sched { display: flex; align-items: center; gap: 5px; margin-top: 8px; height: 16px; font-weight: 700; }
.bar { margin: 10px 0; height: 20px; background: #e5e5e5; padding-left: 8px; font-size: 10px; line-height: 20px; font-weight: 600; color: #111; }
.row + .bar { margin: 0 0 11px; }

/* hand-drawn highlight over the dialog */
.mark { position: absolute; left: calc(50% - 533px); top: 48px; width: 988px; height: 700px; pointer-events: none; }
```
